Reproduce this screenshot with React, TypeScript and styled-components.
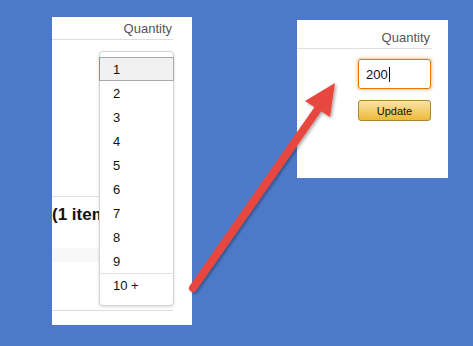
import React from "react";
import styled, { createGlobalStyle } from "styled-components";

const Global = createGlobalStyle`
  html, body { margin: 0; padding: 0; }
  body {
    background: #4d7ac8;
    font-family: "Liberation Sans", Arial, sans-serif;
    width: 473px;
    height: 346px;
    overflow: hidden;
  }
`;

const Stage = styled.div`
  position: relative;
  width: 473px;
  height: 346px;
  display: flex;
  align-items: flex-start;
  padding-left: 52px;
  box-sizing: border-box;
  gap: 105px;
`;

const Panel = styled.div<{ $w: number; $h: number; $top: number }>`
  position: relative;
  width: ${(p) => p.$w}px;
  height: ${(p) => p.$h}px;
  margin-top: ${(p) => p.$top}px;
  background: #fff;
  display: flex;
  flex-direction: column;
`;

const Header = styled.div<{ $h: number; $pr: number; $lw: number }>`
  height: ${(p) => p.$h}px;
  width: ${(p) => p.$lw}px;
  border-bottom: 1px solid #dedede;
  display: flex;
  justify-content: flex-end;
  align-items: flex-end;
  padding-bottom: 3px;
  box-sizing: border-box;
  font-size: 13px;
  color: #555;
  padding-right: ${(p) => p.$pr}px;
`;

const Section = styled.div`
  margin-top: 156px;
  width: 47px;
  border-top: 1px solid #e3e3e3;
  padding-top: 8px;
  font-size: 17px;
  font-weight: bold;
  color: #111;
  white-space: nowrap;
  height: 40px;
`;

const Band = styled.div`
  margin-top: 3px;
  width: 47px;
  height: 14px;
  background: #f8f8f8;
`;

const Footer = styled.div`
  margin-top: auto;
  margin-bottom: 14px;
  width: 121px;
  border-top: 1px solid #dcdcdc;
`;

const Dropdown = styled.div`
  position: absolute;
  left: 47px;
  top: 34px;
  width: 75px;
  height: 255px;
  box-sizing: border-box;
  background: #fff;
  border: 1px solid #d4d4d4;
  border-radius: 4px;
  box-shadow: 0 1px 3px rgba(0, 0, 0, 0.15);
  padding: 5px 0 0 0;
  display: flex;
  flex-direction: column;
`;

const Item = styled.div<{ $active?: boolean; $sep?: boolean }>`
  height: 24px;
  flex: none;
  box-sizing: border-box;
  display: flex;
  align-items: center;
  padding-left: 13px;
  font-size: 13px;
  color: #111;
  background: ${(p) => (p.$active ? "#f1f1f1" : "transparent")};
  border: 1px solid ${(p) => (p.$active ? "#a8a8a8" : "transparent")};
  border-left: 1px solid ${(p) => (p.$active ? "#e47911" : "transparent")};
  margin: 0 -1px;
  ${(p) => (p.$sep ? "border-top: 1px solid #e4e4e4; margin-top: 0; height: 25px;" : "")}
`;

const Controls = styled.div`
  display: flex;
  flex-direction: column;
  gap: 11px;
  padding-left: 61px;
  margin-top: 10px;
`;

const QtyInput = styled.div`
  width: 73px;
  height: 30px;
  box-sizing: border-box;
  border: 1px solid #e77600;
  border-radius: 3px;
  box-shadow: 0 0 3px 1px rgba(228, 121, 17, 0.45);
  display: flex;
  align-items: center;
  padding-left: 7px;
  font-size: 13px;
  color: #111;
`;

const Caret = styled.span`
  display: inline-block;
  width: 1px;
  height: 15px;
  background: #111;
  margin-left: 1px;
`;

const UpdateButton = styled.div`
  width: 73px;
  height: 21px;
  box-sizing: border-box;
  border: 1px solid #a88734;
  border-radius: 3px;
  background: linear-gradient(to bottom, #f8e3a8, #eeba37);
  display: flex;
  align-items: center;
  justify-content: center;
  font-size: 11px;
  color: #111;
`;

const ArrowSvg = styled.svg`
  position: absolute;
  left: 0;
  top: 0;
  pointer-events: none;
`;

export default function App() {
  const nums = ["1", "2", "3", "4", "5", "6", "7", "8", "9"];
  return (
    <>
      <Global />
      <Stage>
        <Panel $w={140} $h={308} $top={17}>
          <Header $h={23} $pr={1} $lw={121}>Quantity</Header>
          <Section>(1 item</Section>
          <Band />
          <Footer />
          <Dropdown>
            {nums.map((n, i) => (
              <Item key={n} $active={i === 0}>
                {n}
              </Item>
            ))}
            <Item $sep>10 +</Item>
          </Dropdown>
        </Panel>
        <Panel $w={151} $h={158} $top={20}>
          <Header $h={29} $pr={2} $lw={135}>Quantity</Header>
          <Controls>
            <QtyInput>
              200<Caret />
            </QtyInput>
            <UpdateButton>Update</UpdateButton>
          </Controls>
        </Panel>
        <ArrowSvg width="473" height="346" viewBox="0 0 473 346">
          <defs>
            <filter id="sh" x="-20%" y="-20%" width="140%" height="140%">
              <feDropShadow dx="1.5" dy="1.5" stdDeviation="1.5" floodColor="#000" floodOpacity="0.35" />
            </filter>
          </defs>
          <g filter="url(#sh)">
            <line x1="193" y1="288" x2="318" y2="109" stroke="#e8473f" strokeWidth="8" strokeLinecap="round" />
            <polygon points="335,83 305,101 330,117" fill="#e8473f" />
          </g>
        </ArrowSvg>
      </Stage>
    </>
  );
}
